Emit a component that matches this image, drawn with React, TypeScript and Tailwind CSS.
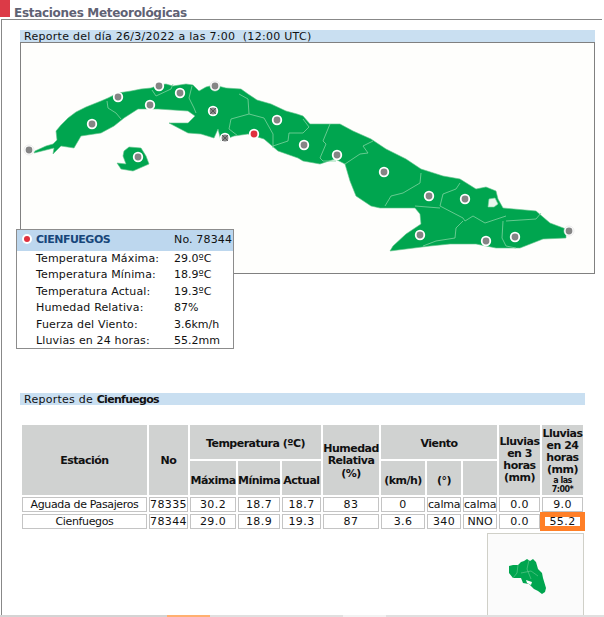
import React from 'react';

const font = { fontFamily: '"DejaVu Sans", Verdana, sans-serif' };

type Marker = { x: number; y: number; kind?: 'edge' | 'cross' | 'active' };

const markers: Marker[] = [
	{ x: 28, y: 149, kind: 'edge' },
	{ x: 91, y: 123 },
	{ x: 117, y: 96 },
	{ x: 158, y: 85 },
	{ x: 179, y: 92 },
	{ x: 149, y: 104 },
	{ x: 137, y: 156 },
	{ x: 212, y: 110, kind: 'cross' },
	{ x: 224, y: 137, kind: 'cross' },
	{ x: 214, y: 85, kind: 'edge' },
	{ x: 253, y: 133, kind: 'active' },
	{ x: 276, y: 119 },
	{ x: 303, y: 144 },
	{ x: 336, y: 154 },
	{ x: 383, y: 171 },
	{ x: 428, y: 195 },
	{ x: 464, y: 198 },
	{ x: 419, y: 234 },
	{ x: 485, y: 240 },
	{ x: 514, y: 236 },
	{ x: 568, y: 230, kind: 'edge' },
];

const borders = [
	'106,100 107,107 115,112 120,118',
	'151,89 155,95 170,88 172,83',
	'191,85 188,97 193,107 195,112',
	'238,93 247,98 248,113 230,118 228,128 237,135',
	'248,113 263,117 272,133 272,147',
	'272,145 287,140 288,132 302,132 308,126 302,118',
	'329,123 322,140 325,143 319,157 322,160 335,160',
	'344,163 359,153 367,152 362,145 372,140',
	'420,172 419,182 402,192 390,195 384,205',
	'459,182 455,188 442,193 439,205 462,217 464,220 472,215 484,222 505,215',
	'414,205 439,207',
	'505,220 535,218 540,212',
	'502,220 501,237 505,245 515,247',
	'462,220 455,227 454,237 435,240 422,245',
];

const Cuba = () => (
	<svg width="574" height="232" viewBox="20 42 574 232" className="block">
		<polygon
			fill="#00a54f"
			stroke="#5fc48a"
			strokeWidth="0.6"
			points="34,150 45,145 52,143 56,139 55,130 60,124 67,117 75,111 85,106 100,100 107,97 117,92 130,90 140,88 150,87 158,84 165,83 172,85 185,83 192,84 198,90 205,86 213,84 225,87 240,88 247,93 256,99 270,103 285,110 296,113 302,115 309,123 327,123 339,123 352,130 370,138 385,148 405,158 420,168 442,175 459,178 475,188 485,186 495,190 497,198 502,207 535,210 549,222 565,228 565,237 542,238 519,247 495,247 475,243 449,243 429,245 389,250 392,245 405,233 420,223 419,213 414,207 379,207 370,205 355,195 349,180 344,163 334,158 319,163 302,160 297,157 277,150 263,138 247,133 233,135 220,140 217,128 213,137 200,133 187,132 168,122 187,122 194,115 187,110 157,108 137,108 123,117 113,125 100,132 80,135 73,147 60,145 52,153 53,147 33,152"
		/>
		<polygon
			fill="#00a54f"
			stroke="#5fc48a"
			strokeWidth="0.6"
			points="123,150 128,146 140,147 145,155 148,163 132,170 120,168 116,162 125,163 122,155"
		/>
		<polygon fill="#e9f7ee" stroke="#7fd3a0" strokeWidth="0.6" points="488,198 494,197 497,203 493,206 487,206" />
		{borders.map((points) => (
			<polyline key={points} points={points} fill="none" stroke="#7fd3a0" strokeWidth="0.8" />
		))}
		{markers.map((m) => (
			<g key={`${m.x}-${m.y}`}>
				<circle
					cx={m.x}
					cy={m.y}
					r={m.kind === 'edge' ? 5 : 5.2}
					fill="#fff"
					stroke={m.kind === 'edge' ? '#d8d8d8' : 'none'}
					strokeWidth="0.5"
				/>
				<circle cx={m.x} cy={m.y} r="3.4" fill={m.kind === 'active' ? '#e0303e' : '#858585'} />
				{m.kind === 'cross' && (
					<path
						d={`M${m.x - 3} ${m.y - 3}L${m.x + 3} ${m.y + 3}M${m.x + 3} ${m.y - 3}L${m.x - 3} ${m.y + 3}`}
						stroke="#4a4a4a"
						strokeWidth="0.8"
					/>
				)}
			</g>
		))}
	</svg>
);

const Thumb = () => (
	<svg width="96" height="82" viewBox="487 533 96 82" className="block">
		<polygon
			fill="#00a54f"
			points="508,565 512,564 517,564 520,561 523,560 526,558 529,560 532,558 535,561 537,568 541,572 542,577 545,587 544,591 541,593 537,590 533,588 528,583 522,582 520,577 512,577 508,572"
		/>
		<polyline points="517,564 516,572 512,577" fill="none" stroke="#7fd3a0" strokeWidth="0.5" />
		<polyline points="528,559 526,568 530,578" fill="none" stroke="#7fd3a0" strokeWidth="0.5" />
		<polyline points="520,572 530,570 537,575" fill="none" stroke="#7fd3a0" strokeWidth="0.5" />
		<polygon fill="#fff" points="525,579 531,581 530,584 526,582" />
	</svg>
);

const details = [
	['Temperatura Máxima:', '29.0ºC'],
	['Temperatura Mínima:', '18.9ºC'],
	['Temperatura Actual:', '19.3ºC'],
	['Humedad Relativa:', '87%'],
	['Fuerza del Viento:', '3.6km/h'],
	['Lluvias en 24 horas:', '55.2mm'],
];

const StationPopup = () => (
	<div className="absolute left-[16px] top-[229px] w-[218px] h-[120px] border border-[#8c8c8c] bg-white text-[11px] text-[#111]">
		<div className="flex items-center h-[21px] bg-[#bdd7ee]">
			<div className="w-[19px] pl-[5px]">
				<div className="w-[10px] h-[10px] rounded-full bg-white flex items-center justify-center mb-[3px]">
					<div className="w-[6px] h-[6px] rounded-full bg-[#e0303e]" />
				</div>
			</div>
			<div className="w-[138px] font-bold text-[#17467a] tracking-[-0.5px]">CIENFUEGOS</div>
			<div className="tracking-[0.15px]">No. 78344</div>
		</div>
		<div>
			{details.map(([label, value]) => (
				<div key={label} className="flex items-center h-[16.4px] pl-[19px]">
					<div className="w-[138px] tracking-[0.15px]">{label}</div>
					<div>{value}</div>
				</div>
			))}
		</div>
	</div>
);

const th = 'bg-[#d0d2d1] font-bold text-center align-middle p-0 text-[#111] tracking-[-0.5px]';
const td = 'border border-[#c4c4c4] text-center align-middle p-0 h-[15px] leading-[13px]';

const rows = [
	['Aguada de Pasajeros', '78335', '30.2', '18.7', '18.7', '83', '0', 'calma', 'calma', '0.0', '9.0'],
	['Cienfuegos', '78344', '29.0', '18.9', '19.3', '87', '3.6', '340', 'NNO', '0.0', '55.2'],
];

const cellClass = (cell: string, i: number) => {
	if (cell === '55.2') {
		return 'border-[3px] border-[#ff7f27] outline-2 outline-[#ff7f27] text-center align-middle p-0 h-[15px] leading-[9px] tracking-[0.4px]';
	}
	if (i === 0) return `${td} tracking-[-0.35px]`;
	if (cell === 'calma') return `${td} tracking-[-0.2px]`;
	if (cell === 'NNO') return td;
	return `${td} tracking-[0.4px]`;
};

const ReportTable = () => (
	<table className="table-fixed border-separate border-spacing-[2px] w-[565px] text-[11px] text-[#111]">
		<colgroup>
			<col className="w-[125px]" />
			<col className="w-[39px]" />
			<col className="w-[46px]" />
			<col className="w-[42px]" />
			<col className="w-[39px]" />
			<col className="w-[56px]" />
			<col className="w-[44px]" />
			<col className="w-[34px]" />
			<col className="w-[34px]" />
			<col className="w-[41px]" />
			<col className="w-[41px]" />
		</colgroup>
		<thead>
			<tr className="h-[34px]">
				<th rowSpan={2} className={`${th} pt-[3px]`}>Estación</th>
				<th rowSpan={2} className={`${th} pt-[3px]`}>No</th>
				<th colSpan={3} className={`${th} pt-[4px]`}>Temperatura (ºC)</th>
				<th rowSpan={2} className={`${th} leading-[12.3px] pt-[3px]`}>Humedad Relativa (%)</th>
				<th colSpan={3} className={`${th} pt-[4px]`}>Viento</th>
				<th rowSpan={2} className={`${th} leading-[12px]`}>Lluvias en 3 horas (mm)</th>
				<th rowSpan={2} className={`${th} leading-[12px] pt-[2px]`}>
					Lluvias en 24 horas (mm)
					<div className="text-[8px] leading-[9.5px]">a las 7:00*</div>
				</th>
			</tr>
			<tr className="h-[34px]">
				<th className={`${th} pt-[6px]`}>Máxima</th>
				<th className={`${th} pt-[6px]`}>Mínima</th>
				<th className={`${th} pt-[6px]`}>Actual</th>
				<th className={`${th} pt-[6px]`}>(km/h)</th>
				<th className={`${th} pt-[6px]`}>(°)</th>
				<th className={th}></th>
			</tr>
		</thead>
		<tbody>
			{rows.map((row) => (
				<tr key={row[0]}>
					{row.map((cell, i) => (
						<td key={i} className={cellClass(cell, i)}>
							{cell}
						</td>
					))}
				</tr>
			))}
		</tbody>
	</table>
);

export default function App() {
	return (
		<div className="relative flex flex-col w-[604px] h-[617px] overflow-hidden bg-white" style={font}>
			<div className="flex h-[19px] shrink-0">
				<div className="w-[10px] h-[17px] bg-[#dc3a47]" />
				<div className="pl-[4px] pt-[6px] text-[12px] leading-[15px] font-bold text-[#5f6274] tracking-[-0.3px]">
					Estaciones Meteorológicas
				</div>
			</div>
			<div className="flex-1 ml-[1px] mr-[2px] border-l border-t border-[#888] pl-[18px] pt-[10px] min-h-0">
				<div className="w-[575px] h-[12px] bg-[#c9dff1] pl-[4px] text-[11px] leading-[14px] text-[#111] whitespace-pre tracking-[0.28px]">
					Reporte del día 26/3/2022 a las 7:00  (12:00 UTC)
				</div>
				<div className="w-[575px] h-[232px] border border-[#808080] bg-[#fefefc]">
					<Cuba />
				</div>
				<div className="mt-[119px] w-[565px] h-[12px] bg-[#c9dff1] pl-[4px] text-[11px] leading-[14px] text-[#111] tracking-[0.25px]">
					Reportes de <b className="tracking-[-0.7px]">Cienfuegos</b>
				</div>
				<div className="mt-[18px]">
					<ReportTable />
				</div>
				<div className="ml-[467px] mt-[2px] w-[97px] h-[83px] border border-[#d0d0c8] border-b-0 bg-[#fbfbfb]">
					<Thumb />
				</div>
			</div>
			<div className="flex h-[2px] shrink-0 bg-[#e0e0e0]">
				<div className="w-[167px] bg-[#d4d4d4]" />
				<div className="w-[43px] bg-[#ffb070]" />
				<div className="w-[133px]" />
				<div className="w-[43px] bg-[#f2f2f2]" />
			</div>
			<StationPopup />
		</div>
	);
}
